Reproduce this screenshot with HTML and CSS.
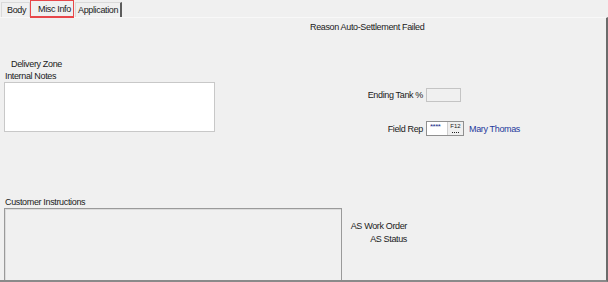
FILE: index.html
```html
<!DOCTYPE html>
<html>
<head>
<meta charset="utf-8">
<link rel="stylesheet" href="styles.css">
</head>
<body>
<div class="window">
  <div class="tabs">
    <div class="tab tab-first">Body</div>
    <div class="tab tab-active">Misc Info</div>
    <div class="tab tab-last">Application</div>
  </div>
  <div class="panel">
    <div class="col-left">
      <div class="label delivery">Delivery Zone</div>
      <div class="label notes-label">Internal Notes</div>
      <div class="notes"></div>
      <div class="label cust-label">Customer Instructions</div>
      <div class="cust"></div>
    </div>
    <div class="col-right">
      <div class="reason">Reason Auto-Settlement Failed</div>
      <div class="row tank-row">
        <span class="label rlabel">Ending Tank %</span>
        <span class="tank-input"></span>
      </div>
      <div class="row rep-row">
        <span class="label rlabel">Field Rep</span>
        <span class="rep-input"><span class="stars">****</span><span class="f12">F12</span></span>
        <span class="rep-name">Mary Thomas</span>
      </div>
      <div class="as-block">
        <div class="as-line">AS Work Order</div>
        <div class="as-line">AS Status</div>
      </div>
    </div>
  </div>
</div>
</body>
</html>
```

FILE: styles.css
```css
html, body {
  margin: 0;
  padding: 0;
  background: #f0f0f0;
}
body {
  font-family: "Liberation Sans", Arial, sans-serif;
  font-size: 9px;
  letter-spacing: -0.35px;
  color: #1a1a1a;
  width: 608px;
  height: 282px;
  overflow: hidden;
}
.window {
  display: flex;
  flex-direction: column;
  height: 282px;
}
.tabs {
  display: flex;
  align-items: flex-end;
  height: 17px;
  padding-left: 1px;
  box-sizing: border-box;
  white-space: nowrap;
}
.tab {
  height: 15px;
  line-height: 14px;
  border: 1px solid #dadada;
  border-bottom: none;
  background: #f0f0f0;
  box-sizing: border-box;
  white-space: nowrap;
}
.tab-first {
  width: 29px;
  padding-left: 5px;
}
.tab-active {
  height: 18px;
  line-height: 16px;
  width: 44px;
  border: 1px solid #e8474a;
  border-bottom: 2px solid #e8474a;
  padding: 0 0 0 7px;
  background: #f0f0f0;
  position: relative;
  top: 1px;
}
.tab-last {
  width: 47px;
  border-right: 2px solid #5c5c5c;
  padding-left: 2px;
  margin-left: 1px;
}
.panel {
  flex: 1;
  display: flex;
  border-top: 1px solid #f8f8f8;
  border-right: 2px solid #6b6b6b;
  border-bottom: 2px solid #8a8a8a;
  box-sizing: border-box;
}
.col-left {
  width: 342px;
  display: flex;
  flex-direction: column;
  padding-left: 4px;
  box-sizing: border-box;
}
.label {
  white-space: nowrap;
}
.delivery {
  margin-top: 41px;
  margin-left: 7px;
  line-height: 11px;
}
.notes-label {
  margin-top: 1px;
  margin-left: 1px;
  line-height: 11px;
}
.notes {
  width: 211px;
  height: 50px;
  background: #fff;
  border: 1px solid #c8c8c8;
  box-sizing: border-box;
}
.cust-label {
  margin-top: 65px;
  margin-left: 1px;
  line-height: 11px;
}
.cust {
  flex: 1;
  border: 1px solid #9a9a9a;
  border-bottom: none;
  box-shadow: inset 1px 1px 0 #dcdcdc;
}
.col-right {
  flex: 1;
  display: flex;
  flex-direction: column;
}
.reason {
  margin-top: 4px;
  margin-left: -32px;
  line-height: 11px;
  white-space: nowrap;
}
.row {
  display: flex;
  align-items: center;
}
.rlabel {
  display: inline-block;
  width: 81px;
  text-align: right;
}
.tank-row {
  margin-top: 55px;
}
.tank-input {
  display: inline-block;
  width: 35px;
  height: 14px;
  margin-left: 3px;
  border: 1px solid #c4c4c4;
  background: #f0f0f0;
  box-sizing: border-box;
}
.rep-row {
  margin-top: 19px;
}
.rep-input {
  display: inline-flex;
  align-items: center;
  width: 38px;
  height: 15px;
  margin-left: 3px;
  border: 1px solid #8f8f8f;
  background: #fff;
  box-sizing: border-box;
  position: relative;
}
.stars {
  font-size: 8px;
  color: #1c2f8a;
  margin-left: 3px;
  letter-spacing: -0.5px;
  position: relative;
  top: -2px;
}
.f12 {
  position: absolute;
  right: 0;
  top: 0;
  width: 15px;
  height: 13px;
  font-size: 6px;
  letter-spacing: 0;
  line-height: 8px;
  text-align: center;
  background: #efefef;
  border-left: 1px solid #cfcfcf;
  color: #222;
}
.f12::after {
  content: "";
  position: absolute;
  left: 4px;
  bottom: 2px;
  width: 7px;
  height: 1px;
  border-bottom: 1px dotted #222;
}
.rep-name {
  margin-left: 5px;
  color: #1e3a9c;
  white-space: nowrap;
}
.as-block {
  margin-top: 84px;
  width: 65px;
  text-align: right;
  line-height: 13px;
  white-space: nowrap;
}
```
